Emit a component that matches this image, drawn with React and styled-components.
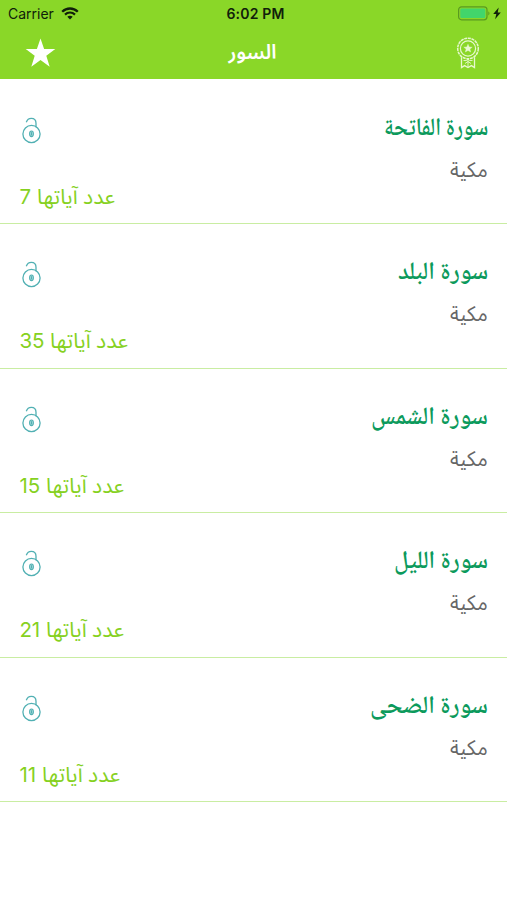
import { useLayoutEffect, useRef, useState } from "react";
import styled, { createGlobalStyle } from "styled-components";

const GlobalStyle = createGlobalStyle`
    * {
        box-sizing: border-box;
    }
    body {
        margin: 0;
        background-color: #ffffff;
        font-family: Inter, "Liberation Sans", "DejaVu Sans", sans-serif;
    }
`;

const Screen = styled.div`
    width: 100%;
    height: 900px;
    overflow: hidden;
    background-color: #ffffff;
`;
const Header = styled.header`
    height: 79px;
    background-color: #8ad728;
`;
const StatusBar = styled.div`
    height: 27px;
    padding: 0 6px 0 8px;
    display: grid;
    grid-template-columns: 1fr auto 1fr;
    align-items: center;
    color: #10200a;
    font-size: 14px;
`;
const StatusGroup = styled.div`
    display: flex;
    align-items: center;
    gap: ${(props) => props.$gap};
    justify-content: ${(props) => props.$justify};
    svg {
        display: block;
    }
`;
const Time = styled.span`
    font-size: 14px;
    font-weight: 600;
    letter-spacing: 0.2px;
    padding-left: 2px;
`;
const NavBar = styled.div`
    height: 52px;
    padding: 0 27px 0 25px;
    display: grid;
    grid-template-columns: 1fr auto 1fr;
    align-items: center;
    svg {
        display: block;
    }
    svg:last-child {
        justify-self: end;
    }
`;
const List = styled.ul`
    margin: 0;
    padding: 0.5px 0 0;
    list-style: none;
`;
const Row = styled.li`
    height: 144.5px;
    padding: 29px 19px 0 20px;
    display: flex;
    justify-content: space-between;
    border-bottom: 1px solid #c9eda2;
`;
const Column = styled.div`
    display: flex;
    flex-direction: column;
    align-items: ${(props) => props.$align};
`;
const Lock = styled.svg`
    display: block;
    margin: 8px 0 0 1px;
`;
const Label = styled.span`
    display: block;
    height: ${(props) => props.$height};
    line-height: ${(props) => props.$height};
    margin-top: ${(props) => props.$top || "0"};
    font-family: ${(props) => props.$font || '"Noto Sans Arabic", "DejaVu Sans", sans-serif'};
    font-size: ${(props) => props.$size};
    font-weight: ${(props) => props.$weight || 400};
    color: ${(props) => props.$color};
    white-space: nowrap;
    transform-origin: ${(props) => props.$origin || "right"} center;
`;
const Count = styled.div`
    display: flex;
    align-items: center;
    gap: 6px;
    height: 30px;
    margin: 37px 0 0 -0.5px;
    color: #86d11f;
`;
const Digits = styled.span`
    font-size: 20.5px;
    line-height: 30px;
    letter-spacing: -0.2px;
`;

// Arabic label squeezed to a fixed width
const FitLabel = ({ width, children, ...rest }) => {
    const ref = useRef();
    const [scale, setScale] = useState(1);
    useLayoutEffect(() => {
        setScale(width / ref.current.offsetWidth);
    }, [width]);
    return (
        <Label ref={ref} dir="rtl" lang="ar" style={{ transform: `scaleX(${scale})` }} {...rest}>
            {children}
        </Label>
    );
};

const WifiIcon = () => (
    <svg width="18" height="13" viewBox="0 0 18 13" fill="none" stroke="#10200a">
        <path d="M1.2 4.7C5.6.4 12.4.4 16.8 4.7" strokeWidth="2.3" />
        <path d="M4 7.6C6.9 4.8 11.1 4.8 14 7.6" strokeWidth="2.2" />
        <path d="M9 12.4 6.3 9.7C7.8 8.4 10.2 8.4 11.7 9.7Z" fill="#10200a" stroke="none" />
    </svg>
);
const BatteryIcon = () => (
    <svg width="32" height="15" viewBox="0 0 32 15">
        <rect x="0.6" y="0.8" width="28.4" height="13" rx="3" fill="none" stroke="#599a20" strokeWidth="1.2" />
        <rect x="2.3" y="2.5" width="25" height="9.6" rx="1.4" fill="#42d56b" />
        <path d="M30.3 5.2c1.6.8 1.6 3.4 0 4.2Z" fill="#599a20" />
    </svg>
);
const BoltIcon = () => (
    <svg width="8" height="13" viewBox="0 0 8 13">
        <path d="M5.7.5.2 7h3.1L2.1 12.3 7.8 5.4H4.7Z" fill="#10200a" />
    </svg>
);
const StarIcon = () => (
    <svg width="31" height="30" viewBox="0 0 31 30">
        <path
            d="M15.5.5 19.1 11H30.3L21.3 17.7 24.7 28.7 15.5 22.1 6.3 28.7 9.7 17.7.7 11H11.9Z"
            fill="#ffffff"
        />
    </svg>
);
const AwardIcon = () => (
    <svg width="24" height="32" viewBox="0 0 24 32" fill="none" stroke="#e7f8cf">
        <circle cx="12" cy="11.5" r="10.3" strokeWidth="1.5" strokeDasharray="3 0.7" />
        <circle cx="12" cy="11.5" r="7.6" strokeWidth="1.2" />
        <path
            d="m12 7.2 1.2 2.8 3 .2-2.3 1.9.8 2.9-2.7-1.6L9.3 15l.8-2.9-2.3-1.9 3-.2Z"
            fill="#e7f8cf"
            strokeWidth="0.4"
        />
        <path d="M5.5 20.2V30.6L8.6 28.6 12 30.6 15.4 28.6 18.5 30.6V20.2" strokeWidth="1.3" />
        <path d="M7.5 23.5h3l1.5-1.5 1.5 1.5h3M9 26.5l3-2 3 2M12 22v8" strokeWidth="0.9" />
    </svg>
);
const LockIcon = () => (
    <Lock width="21" height="28" viewBox="0 0 21 28" fill="none" stroke="#51b0b3">
        <circle cx="10.5" cy="17" r="8.6" strokeWidth="1.3" />
        <path d="M5.3 5.2C6.2 2.6 8 1.4 10.3 1.4c3 0 4.7 2 4.7 4.9v3.9" strokeWidth="1.3" />
        <ellipse cx="10.5" cy="16.8" rx="1.9" ry="2.8" fill="#a9dcdc" strokeWidth="1.1" />
        <path d="M10.5 15.2v3.2" strokeWidth="1" />
    </Lock>
);

const surahs = [
    { name: "سورة الفاتحة", width: 104, count: 7 },
    { name: "سورة البلد", width: 90, count: 35 },
    { name: "سورة الشمس", width: 117, count: 15 },
    { name: "سورة الليل", width: 94, count: 21 },
    { name: "سورة الضحى", width: 118, count: 11 },
];

const App = () => {
    return (
        <Screen>
            <GlobalStyle />
            <Header>
                <StatusBar>
                    <StatusGroup $gap="7px" $justify="flex-start">
                        <span>Carrier</span>
                        <WifiIcon />
                    </StatusGroup>
                    <Time>6:02 PM</Time>
                    <StatusGroup $gap="3px" $justify="flex-end">
                        <BatteryIcon />
                        <BoltIcon />
                    </StatusGroup>
                </StatusBar>
                <NavBar>
                    <StarIcon />
                    <FitLabel
                        width={48}
                        $height="40px"
                        $size="20px"
                        $weight={600}
                        $color="#ffffff"
                        $origin="center"
                    >
                        السور
                    </FitLabel>
                    <AwardIcon />
                </NavBar>
            </Header>
            <List>
                {surahs.map((surah) => (
                    <Row key={surah.name}>
                        <Column $align="flex-start">
                            <LockIcon />
                            <Count>
                                <Digits>{surah.count}</Digits>
                                <FitLabel
                                    width={78.5}
                                    $height="30px"
                                    $size="21px"
                                    $color="#86d11f"
                                    $origin="left"
                                >
                                    عدد آياتها
                                </FitLabel>
                            </Count>
                        </Column>
                        <Column $align="flex-end">
                            <FitLabel
                                width={surah.width}
                                $height="40px"
                                $top="1px"
                                $font={'"Noto Naskh Arabic", "Amiri", "DejaVu Sans", serif'}
                                $size="25px"
                                $weight={600}
                                $color="#0c9a5c"
                            >
                                {surah.name}
                            </FitLabel>
                            <FitLabel width={38} $height="30px" $top="5px" $size="21px" $color="#666666">
                                مكية
                            </FitLabel>
                        </Column>
                    </Row>
                ))}
            </List>
        </Screen>
    );
};

export default App;
